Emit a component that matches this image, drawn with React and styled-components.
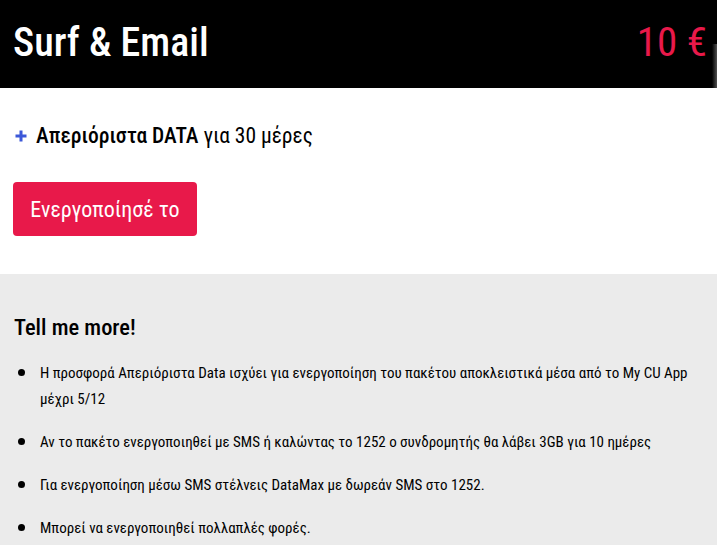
import React from "react";
import styled, { createGlobalStyle } from "styled-components";

const Global = createGlobalStyle`
  html, body { margin: 0; padding: 0; background: #ebebeb; }
  body {
    font-family: Roboto, "Noto Sans", sans-serif;
    font-stretch: 75%;
  }
  * { box-sizing: border-box; }
`;

const Page = styled.div`
  width: 717px;
  height: 545px;
  background: #ebebeb;
  overflow: hidden;
`;

const Header = styled.header`
  position: relative;
  height: 88px;
  background: #000;
  display: flex;
  align-items: center;
  justify-content: space-between;
  padding: 0 10px 4px 13px;
`;

const Title = styled.h1`
  margin: 0;
  color: #fff;
  font-size: 40px;
  font-weight: 500;
  font-stretch: 75%;
`;

const Price = styled.div`
  color: #e8194a;
  font-size: 41px;
  font-weight: 400;
`;

const EdgeShade = styled.div`
  position: absolute;
  right: 0;
  top: 44px;
  bottom: 0;
  width: 5px;
  background: linear-gradient(to right, rgba(60, 60, 60, 0), rgba(95, 95, 95, 0.85));
`;

const Offer = styled.section`
  background: #fff;
  height: 186px;
  padding: 32px 13px 0 13px;
  display: flex;
  flex-direction: column;
  align-items: flex-start;
  gap: 30px;
`;

const Feature = styled.p`
  margin: 0;
  font-size: 21.5px;
  line-height: 32px;
  color: #000;
  display: flex;
  align-items: center;
  gap: 9px;
  padding-left: 2px;
`;

const PlusIcon = styled.svg`
  width: 12px;
  height: 12px;
  flex: none;
`;

const Strong = styled.b`
  font-weight: 500;
`;

const Button = styled.button`
  border: none;
  background: #e8194a;
  color: #fff;
  font-family: inherit;
  font-stretch: 75%;
  font-size: 22px;
  font-weight: 400;
  height: 54px;
  width: 184px;
  padding: 0;
  border-radius: 4px;
  cursor: pointer;
`;

const More = styled.section`
  padding: 38px 6px 0 14px;
`;

const MoreTitle = styled.h2`
  margin: 0 0 18px 0;
  font-size: 22.5px;
  line-height: 30px;
  font-weight: 500;
  color: #000;
`;

const List = styled.ul`
  margin: 0;
  padding: 0 0 0 4px;
  list-style: none;
`;

const Item = styled.li`
  display: flex;
  align-items: flex-start;
  gap: 15px;
  font-size: 15px;
  font-weight: 400;
  line-height: 26px;
  color: #000;
  margin-bottom: 17px;
`;

const Dot = styled.span`
  flex: none;
  width: 7px;
  height: 7px;
  margin-top: 9px;
  border-radius: 50%;
  background: #000;
`;

const items = [
  "Η προσφορά Απεριόριστα Data ισχύει για ενεργοποίηση του πακέτου αποκλειστικά μέσα από το My CU App μέχρι 5/12",
  "Αν το πακέτο ενεργοποιηθεί με SMS ή καλώντας το 1252 ο συνδρομητής θα λάβει 3GB για 10 ημέρες",
  "Για ενεργοποίηση μέσω SMS στέλνεις DataMax με δωρεάν SMS στο 1252.",
  "Μπορεί να ενεργοποιηθεί πολλαπλές φορές.",
];

export default function App() {
  return (
    <Page>
      <Global />
      <Header>
        <Title>Surf &amp; Email</Title>
        <Price>10 €</Price>
        <EdgeShade />
      </Header>
      <Offer>
        <Feature>
          <PlusIcon viewBox="0 0 12 12" aria-hidden="true">
            <path d="M6 0.5V11.5M0.5 6H11.5" stroke="#3c58d8" strokeWidth="3" />
          </PlusIcon>
          <span>
            <Strong>Απεριόριστα DATA</Strong> για 30 μέρες
          </span>
        </Feature>
        <Button>Ενεργοποίησέ το</Button>
      </Offer>
      <More>
        <MoreTitle>Tell me more!</MoreTitle>
        <List>
          {items.map((t) => (
            <Item key={t}>
              <Dot />
              <span>{t}</span>
            </Item>
          ))}
        </List>
      </More>
    </Page>
  );
}
